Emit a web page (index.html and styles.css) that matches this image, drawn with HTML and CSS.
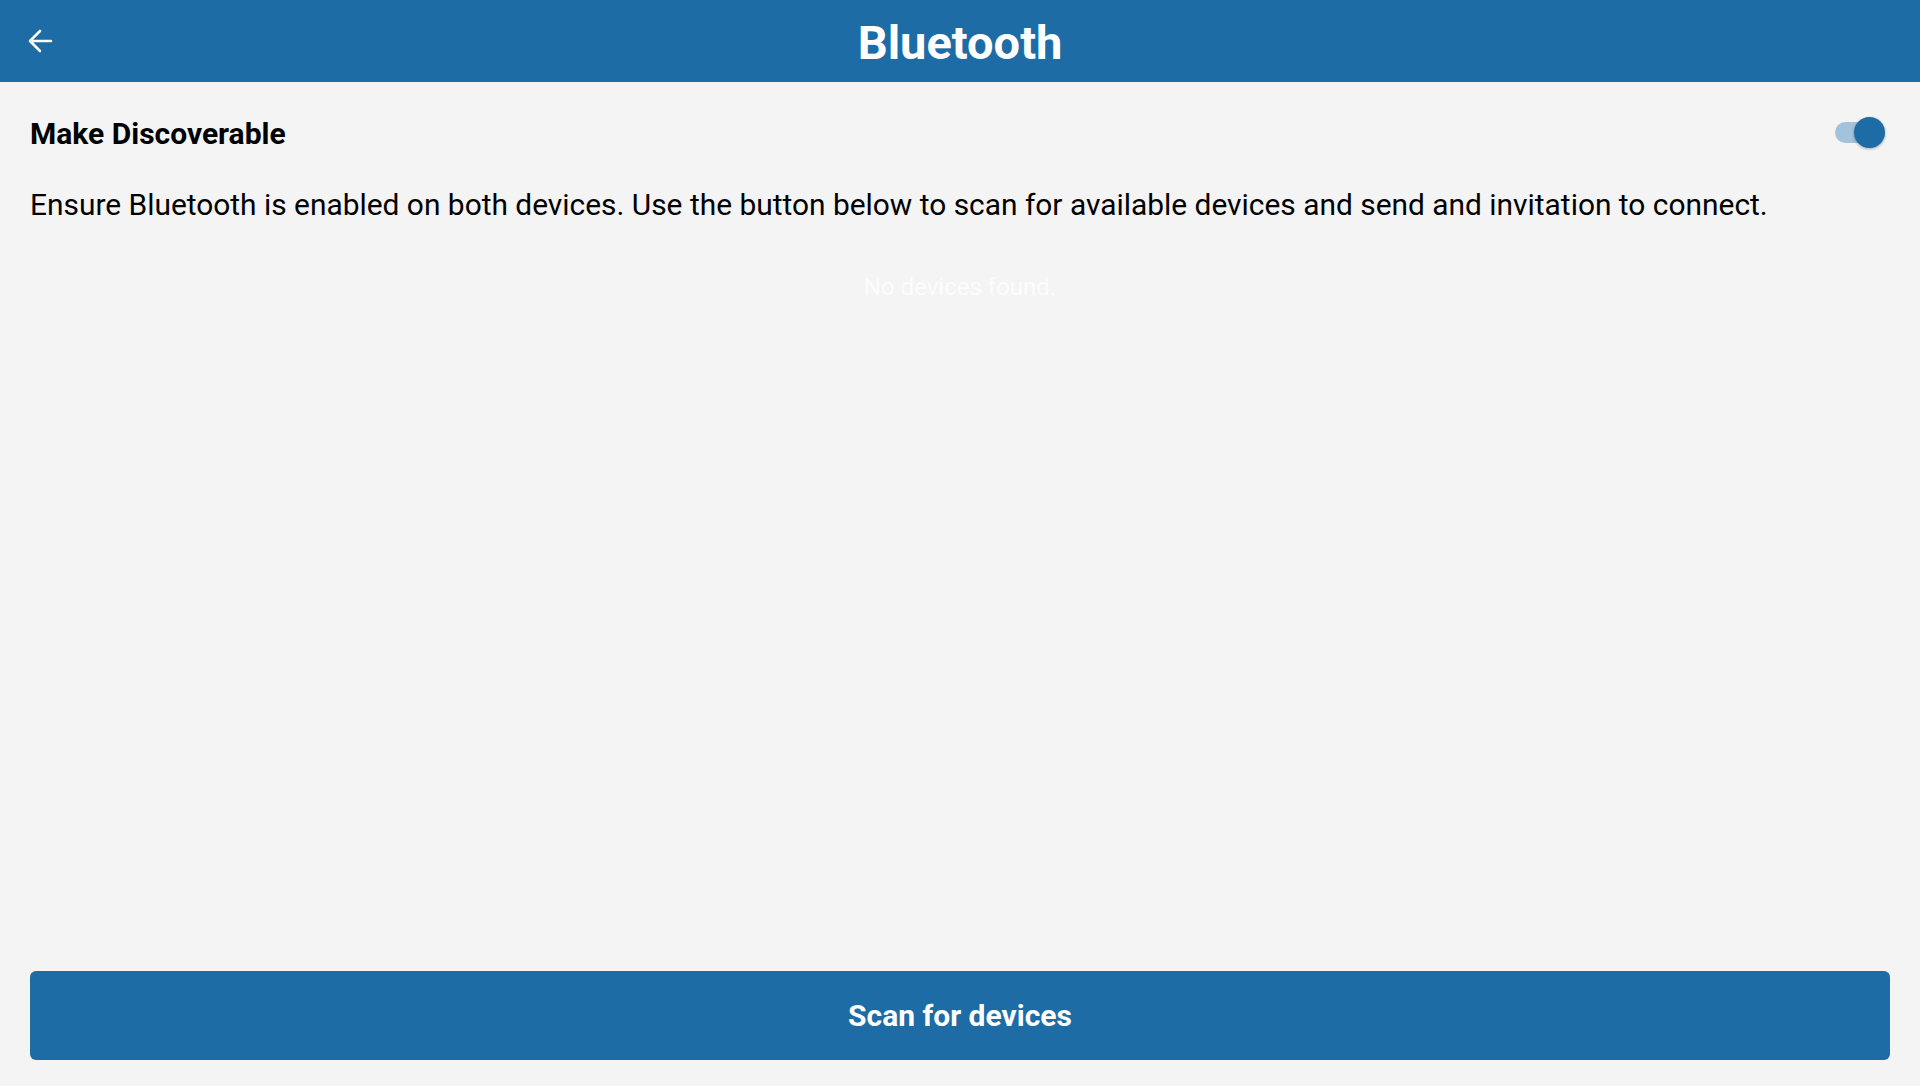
FILE: index.html
```html
<!DOCTYPE html>
<html>
<head>
<meta charset="utf-8">
<link rel="stylesheet" href="styles.css">
</head>
<body>
<div class="app">
  <header class="appbar">
    <button class="back" aria-label="Back">
      <svg width="26" height="26" viewBox="0 0 26 26"><path d="M24 13H3M13 3L3 13l10 10" fill="none" stroke="#fff" stroke-width="2.6" stroke-linecap="round" stroke-linejoin="round"/></svg>
    </button>
    <h1 class="title">Bluetooth</h1>
  </header>
  <main class="content">
    <div class="row">
      <span class="label">Make Discoverable</span>
      <span class="switch"><span class="track"></span><span class="thumb"></span></span>
    </div>
    <p class="desc">Ensure Bluetooth is enabled on both devices. Use the button below to scan for available devices and send and invitation to connect.</p>
    <p class="empty">No devices found.</p>
    <div class="spacer"></div>
    <button class="scan">Scan for devices</button>
  </main>
</div>
</body>
</html>
```
FILE: styles.css
```css
* { box-sizing: border-box; }
html, body { margin: 0; padding: 0; height: 100%; }
body {
  background: #f4f4f4;
  font-family: Roboto, "Liberation Sans", sans-serif;
  color: #000;
}
.app { display: flex; flex-direction: column; height: 100vh; }
.appbar {
  height: 82px;
  background: #1d6ca5;
  display: flex;
  align-items: center;
  position: relative;
  flex: none;
}
.back {
  background: none; border: 0; padding: 0;
  margin-left: 27px;
  width: 26px; height: 26px;
  display: flex;
}
.title {
  position: absolute; left: 0; right: 0; top: 2px;
  margin: 0;
  text-align: center;
  color: #fff;
  font-weight: 700;
  font-size: 47px;
  line-height: 82px;
  pointer-events: none;
}
.content {
  flex: 1;
  display: flex;
  flex-direction: column;
  padding: 0 30px 26px 30px;
}
.row {
  display: flex;
  align-items: center;
  justify-content: space-between;
  height: 56px;
  margin-top: 22px;
}
.label { font-weight: 700; font-size: 30px; line-height: 36px; padding-top: 3px; }
.switch { position: relative; width: 50px; height: 31px; margin-right: 5px; }
.track {
  position: absolute; left: 0; top: 5px;
  width: 44px; height: 21px; border-radius: 11px;
  background: #a3c3dc;
}
.thumb {
  position: absolute; right: 0; top: 0;
  width: 31px; height: 31px; border-radius: 50%;
  background: #1d6ca5;
  box-shadow: 0 1px 3px rgba(0,0,0,0.3);
}
.desc { margin: 27px 0 0; font-size: 29.9px; line-height: 36px; }
.empty { margin: 50px 0 0; text-align: center; color: #fcfcfc; font-size: 24px; line-height: 28px; }
.spacer { flex: 1; }
.scan {
  height: 89px;
  flex: none;
  border: 0; border-radius: 6px;
  background: #1d6ca5;
  color: #fff;
  font-family: Roboto, "Liberation Sans", sans-serif;
  font-weight: 700;
  font-size: 30px;
}
```
